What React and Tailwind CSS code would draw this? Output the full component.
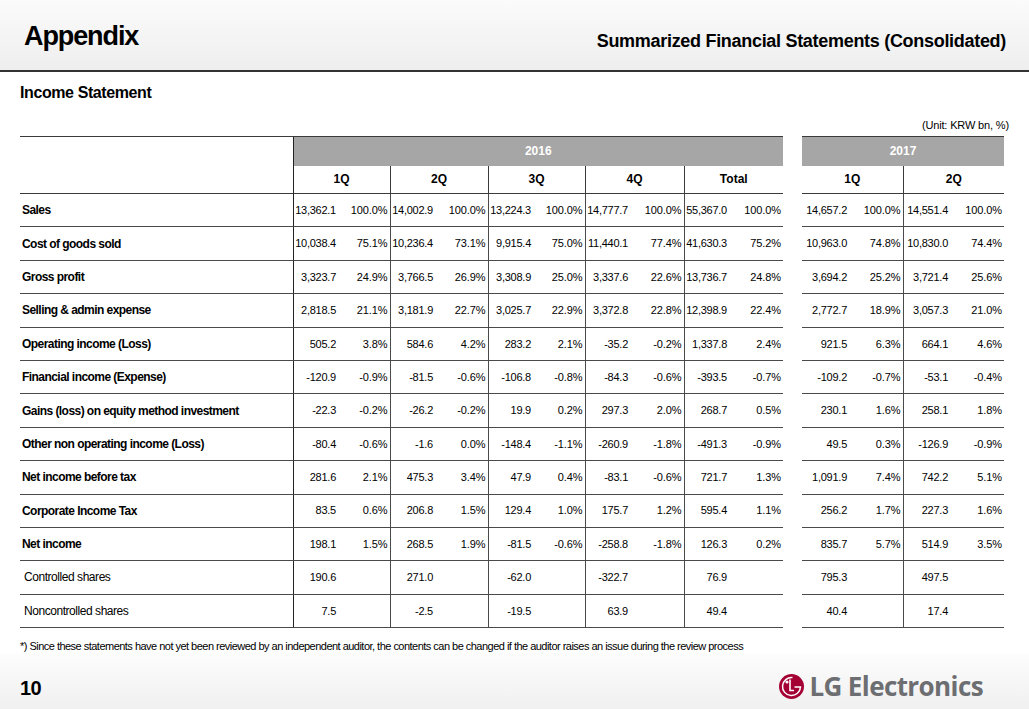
import React from "react";

const rows = [
  ["Sales", true, [["13,362.1","100.0%"],["14,002.9","100.0%"],["13,224.3","100.0%"],["14,777.7","100.0%"],["55,367.0","100.0%"]], [["14,657.2","100.0%"],["14,551.4","100.0%"]]],
  ["Cost of goods sold", true, [["10,038.4","75.1%"],["10,236.4","73.1%"],["9,915.4","75.0%"],["11,440.1","77.4%"],["41,630.3","75.2%"]], [["10,963.0","74.8%"],["10,830.0","74.4%"]]],
  ["Gross profit", true, [["3,323.7","24.9%"],["3,766.5","26.9%"],["3,308.9","25.0%"],["3,337.6","22.6%"],["13,736.7","24.8%"]], [["3,694.2","25.2%"],["3,721.4","25.6%"]]],
  ["Selling & admin expense", true, [["2,818.5","21.1%"],["3,181.9","22.7%"],["3,025.7","22.9%"],["3,372.8","22.8%"],["12,398.9","22.4%"]], [["2,772.7","18.9%"],["3,057.3","21.0%"]]],
  ["Operating income (Loss)", true, [["505.2","3.8%"],["584.6","4.2%"],["283.2","2.1%"],["-35.2","-0.2%"],["1,337.8","2.4%"]], [["921.5","6.3%"],["664.1","4.6%"]]],
  ["Financial income (Expense)", true, [["-120.9","-0.9%"],["-81.5","-0.6%"],["-106.8","-0.8%"],["-84.3","-0.6%"],["-393.5","-0.7%"]], [["-109.2","-0.7%"],["-53.1","-0.4%"]]],
  ["Gains (loss) on equity method investment", true, [["-22.3","-0.2%"],["-26.2","-0.2%"],["19.9","0.2%"],["297.3","2.0%"],["268.7","0.5%"]], [["230.1","1.6%"],["258.1","1.8%"]]],
  ["Other non operating income (Loss)", true, [["-80.4","-0.6%"],["-1.6","0.0%"],["-148.4","-1.1%"],["-260.9","-1.8%"],["-491.3","-0.9%"]], [["49.5","0.3%"],["-126.9","-0.9%"]]],
  ["Net income before tax", true, [["281.6","2.1%"],["475.3","3.4%"],["47.9","0.4%"],["-83.1","-0.6%"],["721.7","1.3%"]], [["1,091.9","7.4%"],["742.2","5.1%"]]],
  ["Corporate Income Tax", true, [["83.5","0.6%"],["206.8","1.5%"],["129.4","1.0%"],["175.7","1.2%"],["595.4","1.1%"]], [["256.2","1.7%"],["227.3","1.6%"]]],
  ["Net income", true, [["198.1","1.5%"],["268.5","1.9%"],["-81.5","-0.6%"],["-258.8","-1.8%"],["126.3","0.2%"]], [["835.7","5.7%"],["514.9","3.5%"]]],
  ["Controlled shares", false, [["190.6",""],["271.0",""],["-62.0",""],["-322.7",""],["76.9",""]], [["795.3",""],["497.5",""]]],
  ["Noncontrolled shares", false, [["7.5",""],["-2.5",""],["-19.5",""],["63.9",""],["49.4",""]], [["40.4",""],["17.4",""]]],
];

const arial = { fontFamily: '"Liberation Sans", Arial, sans-serif' };

function LgLogo() {
  return (
    <svg width="25" height="25" viewBox="0 0 50 50">
      <circle cx="25" cy="25" r="25" fill="#a50034" />
      <circle cx="16" cy="16" r="3.2" fill="#fff" />
      <path d="M22 11 V33 H30" stroke="#fff" strokeWidth="3.2" fill="none" />
      <path d="M27 7.2 A18 18 0 1 0 43 26 H31" stroke="#fff" strokeWidth="3" fill="none" />
    </svg>
  );
}

export default function App() {
  const vb = "border-l border-[#3a3a3a]";
  return (
    <div className="w-[1029px] h-[709px] bg-white relative overflow-hidden text-black" style={arial}>
      {/* header */}
      <div className="h-[72px] bg-gradient-to-b from-[#fbfbfb] to-[#eeeeee] border-b-2 border-[#333] flex items-end justify-between px-[24px] pb-[20px]">
        <div className="text-[27px] font-bold leading-none tracking-[-1.1px]">Appendix</div>
        <div className="text-[18px] font-bold leading-none tracking-[-0.3px] mr-[-1px]">Summarized Financial Statements (Consolidated)</div>
      </div>

      <div className="px-[20px]">
        <div className="mt-[13px] text-[16px] font-bold leading-none tracking-[-0.4px]">Income Statement</div>
        <div className="mt-[19px] text-right text-[11px] leading-none tracking-[-0.15px]">(Unit: KRW bn, %)</div>

        <table className="mt-[5px] border-collapse table-fixed w-[984px]">
          <colgroup>
            <col className="w-[273px]" />
            <col className="w-[46px]" /><col className="w-[51px]" />
            <col className="w-[46px]" /><col className="w-[52px]" />
            <col className="w-[46px]" /><col className="w-[51px]" />
            <col className="w-[46px]" /><col className="w-[53px]" />
            <col className="w-[46px]" /><col className="w-[53px]" />
            <col className="w-[19px]" />
            <col className="w-[48px]" /><col className="w-[53px]" />
            <col className="w-[48px]" /><col className="w-[53px]" />
          </colgroup>
          <thead className="text-[12px]">
            <tr className="h-[29px]">
              <th rowSpan={2} className="border-t border-b border-[#3a3a3a] p-0"></th>
              <th colSpan={10} className="bg-[#a6a6a6] text-white font-bold border-t border-[#3a3a3a] border-l border-l-[#222] p-0">2016</th>
              <th className="p-0"></th>
              <th colSpan={4} className="bg-[#a6a6a6] text-white font-bold border-t border-[#3a3a3a] p-0">2017</th>
            </tr>
            <tr className="h-[28px]">
              <th colSpan={2} className="font-bold border-b border-[#3a3a3a] border-l border-l-[#222] p-0">1Q</th>
              <th colSpan={2} className={`font-bold border-b border-[#3a3a3a] ${vb} p-0`}>2Q</th>
              <th colSpan={2} className={`font-bold border-b border-[#3a3a3a] ${vb} p-0`}>3Q</th>
              <th colSpan={2} className={`font-bold border-b border-[#3a3a3a] ${vb} p-0`}>4Q</th>
              <th colSpan={2} className={`font-bold border-b border-[#3a3a3a] ${vb} p-0`}>Total</th>
              <th className="p-0"></th>
              <th colSpan={2} className="font-bold border-b border-[#3a3a3a] p-0">1Q</th>
              <th colSpan={2} className={`font-bold border-b border-[#3a3a3a] ${vb} p-0`}>2Q</th>
            </tr>
          </thead>
          <tbody className="text-[11px]">
            {rows.map(([label, bold, y16, y17], i) => (
              <tr key={i} className="h-[33.4px]">
                <td className={`border-b border-[#4a4a4a] p-0 whitespace-nowrap ${bold ? "text-[12px] font-bold tracking-[-0.55px] pl-[2px]" : "text-[12px] tracking-[-0.45px] pl-[4px]"}`}>{label}</td>
                {y16.map(([v, p], j) => (
                  <React.Fragment key={j}>
                    <td className={`border-b border-[#4a4a4a] p-0 pr-[3px] text-right whitespace-nowrap tracking-[-0.25px] ${j === 0 ? "border-l border-l-[#222]" : vb}`}>{v}</td>
                    <td className="border-b border-[#4a4a4a] p-0 pr-[2px] text-right whitespace-nowrap tracking-[-0.1px]">{p}</td>
                  </React.Fragment>
                ))}
                <td className="p-0"></td>
                {y17.map(([v, p], j) => (
                  <React.Fragment key={j}>
                    <td className={`border-b border-[#4a4a4a] p-0 pr-[3px] text-right whitespace-nowrap tracking-[-0.25px] ${j === 1 ? vb : ""}`}>{v}</td>
                    <td className="border-b border-[#4a4a4a] p-0 pr-[2px] text-right whitespace-nowrap tracking-[-0.1px]">{p}</td>
                  </React.Fragment>
                ))}
              </tr>
            ))}
          </tbody>
        </table>

        <div className="mt-[13px] text-[11px] leading-none tracking-[-0.52px] whitespace-nowrap">
          *) Since these statements have not yet been reviewed by an independent auditor, the contents can be changed if the auditor raises an issue during the review process
        </div>
      </div>

      {/* footer */}
      <div className="absolute left-0 right-0 bottom-0 h-[56px] bg-gradient-to-b from-[#fdfdfd] to-[#f0f0f0] flex items-center justify-between pl-[20px] pr-[46px]">
        <div className="text-[20px] font-bold leading-none mt-[14px] tracking-[-0.5px]">10</div>
        <div className="flex items-center gap-[5px] mt-[10px]">
          <LgLogo />
          <span className="text-[26px] font-bold leading-none text-[#6d6e71] tracking-[-0.6px]" style={{ fontFamily: '"Open Sans", "Noto Sans", sans-serif' }}>LG Electronics</span>
        </div>
      </div>
    </div>
  );
}
